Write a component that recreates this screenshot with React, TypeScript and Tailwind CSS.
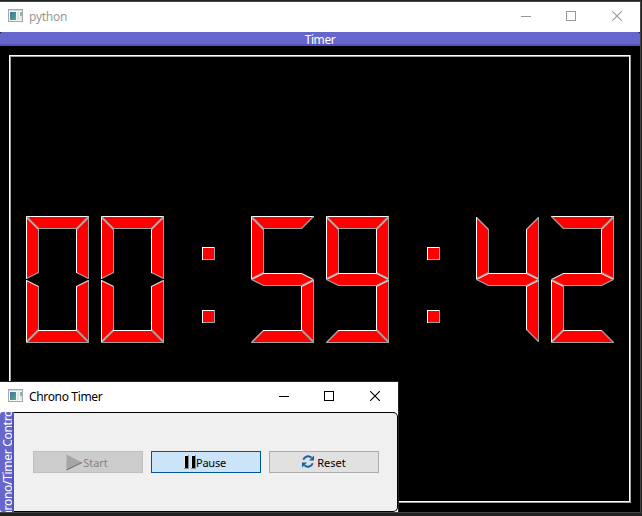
type Point = [number, number];
type Edge = { to: Point; light: boolean };
type Segment = { start: Point; edges: Edge[] };

const L = true;
const D = false;

// Bevelled seven-segment shapes, relative to the digit's top-left corner.
const segments: Segment[] = [
  { start: [0, 0], edges: [{ to: [62, 0], light: L }, { to: [50, 12], light: D }, { to: [12, 12], light: D }, { to: [0, 0], light: D }] },
  { start: [0, 1], edges: [{ to: [12, 13], light: L }, { to: [12, 56], light: D }, { to: [0, 62], light: D }, { to: [0, 1], light: L }] },
  { start: [62, 1], edges: [{ to: [62, 62], light: D }, { to: [50, 56], light: D }, { to: [50, 13], light: L }, { to: [62, 1], light: L }] },
  { start: [0, 63], edges: [{ to: [12, 57], light: L }, { to: [50, 57], light: L }, { to: [62, 63], light: L }, { to: [50, 69], light: D }, { to: [12, 69], light: D }, { to: [0, 63], light: D }] },
  { start: [0, 64], edges: [{ to: [12, 70], light: L }, { to: [12, 113], light: D }, { to: [0, 125], light: D }, { to: [0, 64], light: L }] },
  { start: [62, 64], edges: [{ to: [62, 125], light: D }, { to: [50, 113], light: D }, { to: [50, 70], light: L }, { to: [62, 64], light: L }] },
  { start: [0, 126], edges: [{ to: [12, 114], light: L }, { to: [50, 114], light: L }, { to: [62, 126], light: D }, { to: [0, 126], light: D }] },
  { start: [26, 31], edges: [{ to: [38, 31], light: L }, { to: [38, 43], light: D }, { to: [26, 43], light: D }, { to: [26, 31], light: L }] },
  { start: [26, 94], edges: [{ to: [38, 94], light: L }, { to: [38, 106], light: D }, { to: [26, 106], light: D }, { to: [26, 94], light: L }] },
];

const glyphs: Record<string, number[]> = {
  "0": [0, 1, 2, 4, 5, 6],
  "2": [0, 2, 3, 4, 6],
  "4": [1, 2, 3, 5],
  "5": [0, 1, 3, 5, 6],
  "9": [0, 1, 2, 3, 5, 6],
  ":": [7, 8],
};

function isSlanted(a: Point, b: Point) {
  return a[0] !== b[0] && a[1] !== b[1];
}

// Slanted highlights are dimmer than the straight ones.
function edgeColor(a: Point, b: Point, light: boolean) {
  if (!light) return "#a0a0a0";
  if (!isSlanted(a, b)) return "#ffffff";
  return Math.abs(a[0] - b[0]) === Math.abs(a[1] - b[1]) ? "#b4b0b0" : "#e0dada";
}

function Digit({ char }: { char: string }) {
  return (
    <svg width="63" height="127" viewBox="-0.5 -0.5 63 127" className="shrink-0 overflow-visible">
      {glyphs[char].map((i) => {
        const s = segments[i];
        return (
          <g key={i}>
            <polygon fill="#ff0000" points={[s.start, ...s.edges.map((e) => e.to)].map((p) => p.join(",")).join(" ")} />
            {s.edges.map((e, k) => {
              const from = k === 0 ? s.start : s.edges[k - 1].to;
              return (
                <line
                  key={k}
                  x1={from[0]}
                  y1={from[1]}
                  x2={e.to[0]}
                  y2={e.to[1]}
                  stroke={edgeColor(from, e.to, e.light)}
                  strokeWidth={isSlanted(from, e.to) ? 1.3 : 1}
                  strokeLinecap={isSlanted(from, e.to) ? "butt" : "square"}
                />
              );
            })}
          </g>
        );
      })}
    </svg>
  );
}

function AppIcon() {
  return (
    <svg width="16" height="14" viewBox="0 0 16 14" shapeRendering="crispEdges" className="-mt-[2px]">
      <defs>
        <linearGradient id="pane" x1="0" y1="0" x2="1" y2="1">
          <stop offset="0" stopColor="#3b73ad" />
          <stop offset="1" stopColor="#59ab78" />
        </linearGradient>
      </defs>
      <rect x="0" y="0" width="15" height="13" fill="#a5a9ae" />
      <rect x="1" y="1" width="13" height="1" fill="#d5d8dc" />
      <rect x="1" y="2" width="13" height="10" fill="#f4f5f6" />
      <rect x="2" y="3" width="6" height="8" fill="url(#pane)" />
      <rect x="9" y="3" width="2" height="8" fill="#e2e2e4" />
      <rect x="12" y="3" width="2" height="4" fill="#83b4b0" />
      <rect x="12" y="7" width="2" height="4" fill="#dce9e4" />
    </svg>
  );
}

function WindowControls({ color }: { color: string }) {
  return (
    <div className="ml-auto flex h-full pb-[2px]">
      <div className="flex w-[45px] items-center justify-center">
        <svg width="11" height="10" shapeRendering="crispEdges"><path d="M0 5.5H10" stroke={color} /></svg>
      </div>
      <div className="flex w-[45px] items-center justify-center">
        <svg width="11" height="10" shapeRendering="crispEdges"><path d="M.5 .5H9.5V9.5H.5Z" stroke={color} fill="none" /></svg>
      </div>
      <div className="flex w-[46px] items-center justify-center">
        <svg width="10" height="10"><path d="M0 0L10 10M10 0L0 10" stroke={color} strokeWidth="1.1" /></svg>
      </div>
    </div>
  );
}

function PlayIcon() {
  return (
    <svg width="17" height="17" viewBox="0 0 17 17" className="-ml-[2px]">
      <path d="M.5 .5L16 8.5L.5 16Z" fill="#a5a5a5" />
      <path d="M.5 16L16 8.5" stroke="#777" strokeWidth="1.3" />
    </svg>
  );
}

function PauseIcon() {
  return (
    <svg width="13" height="14" viewBox="0 0 13 14" shapeRendering="crispEdges" className="-mt-px -ml-[2px]">
      <path d="M0 0H5V14H0ZM7 0H12V14H7Z" fill="#8c8c8c" />
      <path d="M0 0H4V13H0ZM7 0H11V13H7Z" fill="#e6e6e6" />
      <path d="M1 1H4V13H1ZM8 1H11V13H8Z" fill="#000" />
    </svg>
  );
}

function ReloadIcon() {
  return (
    <svg width="12" height="13" viewBox="0 0 12 13" fill="none" className="-mt-px">
      <path d="M1.3 4.8C2.4 1.3 6.8 .2 9.5 2.8" stroke="#1263a8" strokeWidth="2" />
      <path d="M12 .6V5.5H7Z" fill="#1263a8" />
      <path d="M10.7 8.2C9.6 11.7 5.2 12.8 2.5 10.2" stroke="#1263a8" strokeWidth="2" />
      <path d="M0 12.4V7.5H5Z" fill="#1263a8" />
    </svg>
  );
}

export default function App() {
  return (
    <div className="relative h-[516px] w-[642px] overflow-hidden bg-[#222222] pt-px font-['Noto_Sans',sans-serif]">
      <div className="h-[512px] w-[641px] border-t border-r border-b border-[#444444] bg-black">
        <div className="flex h-[30px] items-center bg-white pl-2">
          <AppIcon />
          <span className="ml-[5px] text-[12px] leading-4 tracking-[-0.25px] text-[#999999]">python</span>
          <WindowControls color="#999999" />
        </div>
        <div className="flex h-[14px] items-center justify-center rounded-t-[2px] border-b-2 border-[#5555bb] bg-[#6666cc] text-[12px] leading-[14px] text-white">
          <span className="mt-[3px] tracking-[-0.4px]">Timer</span>
        </div>
        <div className="px-[9px] pt-[9px]">
          <div className="h-[448px] w-[622px] border-r border-b border-[#a0a0a0]">
            <div className="h-[447px] w-[621px] border border-white">
              <div className="flex h-[445px] w-[619px] gap-3 border-t border-l border-[#a0a0a0] pt-[159px] pl-[15px]">
                {"00:59:42".split("").map((c, i) => (
                  <Digit key={i} char={c} />
                ))}
              </div>
            </div>
          </div>
        </div>
      </div>

      <div className="absolute top-[381px] left-0 w-[399px] border-t border-r border-[#222222] bg-white">
        <div className="flex h-[30px] items-center bg-white pl-2">
          <AppIcon />
          <span className="ml-[5px] text-[12px] leading-4 tracking-[-0.35px] text-black">Chrono Timer</span>
          <WindowControls color="#000000" />
        </div>
        <div className="flex h-[100px]">
          <div className="flex w-[14px] shrink-0 items-center justify-center overflow-hidden rounded-l-[3px] border-r-2 border-[#5555bb] bg-[#6666cc]">
            <span className="mt-[8px] ml-[3px] -rotate-90 text-[12px] leading-[14px] tracking-[-0.3px] whitespace-nowrap text-white">Chrono/Timer Control</span>
          </div>
          <div className="flex h-[100px] grow items-center gap-2 rounded-r-[5px] border-y border-r border-black bg-[#f0f0f0] pl-[19px] text-[11px] leading-[14px]">
            <button className="flex h-[22px] w-[110px] items-center justify-center border border-[#bfbfbf] bg-[#cccccc] text-[#838383]">
              <PlayIcon />
              <span className="mt-[2px]">Start</span>
            </button>
            <button className="flex h-[22px] w-[110px] items-center justify-center border border-[#005499] bg-[#cce4f7] text-black">
              <PauseIcon />
              <span className="mt-[2px] -ml-px tracking-[-0.2px]">Pause</span>
            </button>
            <button className="flex h-[22px] w-[110px] items-center justify-center gap-[3px] border border-[#adadad] bg-[#e1e1e1] text-black">
              <ReloadIcon />
              <span className="mt-[2px]">Reset</span>
            </button>
          </div>
        </div>
      </div>
    </div>
  );
}
